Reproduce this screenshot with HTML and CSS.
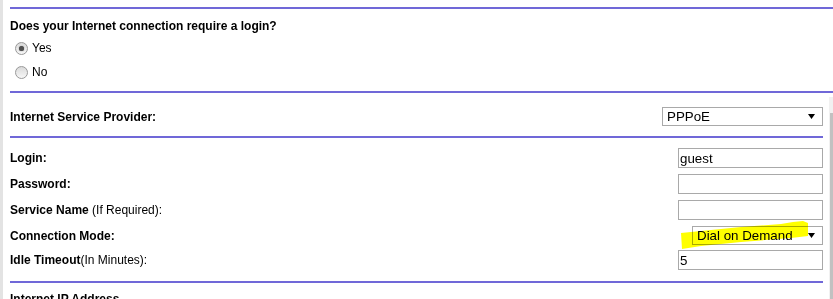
FILE: index.html
```html
<!DOCTYPE html>
<html>
<head>
<meta charset="utf-8">
<title>Internet Setup</title>
<link rel="stylesheet" href="styles.css">
</head>
<body>
<div class="page">
  <div class="gutter"></div>
  <div class="main">
    <div class="rule"></div>
    <div class="question">Does your Internet connection require a login?</div>
    <div class="radios">
      <div class="radio-row"><span class="radio checked"></span><span>Yes</span></div>
      <div class="radio-row"><span class="radio"></span><span>No</span></div>
    </div>
    <div class="rule rule-top"></div>
    <div class="lower">
      <div class="content">
        <div class="isp-row">
          <span class="label">Internet Service Provider:</span>
          <div class="select select-isp">
            <span>PPPoE</span>
            <svg class="arrow" width="7" height="5" viewBox="0 0 7 5"><polygon points="0,0 7,0 3.5,5" fill="#000"/></svg>
          </div>
        </div>
        <div class="rule"></div>
        <div class="form">
          <span class="label">Login:</span>
          <input class="field" type="text" value="guest">
          <span class="label">Password:</span>
          <input class="field" type="password" value="">
          <span class="label">Service Name <span class="note">(If Required):</span></span>
          <input class="field" type="text" value="">
          <span class="label">Connection Mode:</span>
          <div class="select select-mode">
            <span>Dial on Demand</span>
            <svg class="arrow" width="7" height="5" viewBox="0 0 7 5"><polygon points="0,0 7,0 3.5,5" fill="#000"/></svg>
            <svg class="highlight" width="128" height="28" viewBox="0 0 128 28"><polygon points="0,12 20,10 60,6 100,3 112,1 122,0 127,2 127,15 110,17 60,21 20,25 1,28" fill="#ffff00"/></svg>
          </div>
          <span class="label">Idle Timeout<span class="note">(In Minutes):</span></span>
          <input class="field" type="text" value="5">
        </div>
        <div class="rule rule-end"></div>
        <div class="label next">Internet IP Address</div>
      </div>
      <div class="scrollbar"><div class="thumb"></div></div>
    </div>
  </div>
</div>
</body>
</html>
```

FILE: styles.css
```css
html, body {
  margin: 0;
  height: 100%;
  overflow: hidden;
  background: #fff;
}
body {
  font-family: "Liberation Sans", Arial, sans-serif;
  font-size: 12px;
  color: #000;
}
.page {
  display: flex;
  height: 100%;
}
.gutter {
  width: 3px;
  flex: none;
  background: #e3e3e3;
}
.main {
  flex: 1;
  display: flex;
  flex-direction: column;
  padding: 7px 0 0 7px;
  min-width: 0;
}
.rule {
  height: 2px;
  flex: none;
  background: #7068d8;
}
.question {
  font-weight: bold;
  line-height: 14px;
  margin-top: 10px;
}
.radios {
  margin-top: 3px;
  display: flex;
  flex-direction: column;
}
.radio-row {
  height: 24px;
  display: flex;
  align-items: center;
  line-height: 14px;
}
.radio {
  width: 11px;
  height: 11px;
  border: 1px solid #999;
  border-radius: 50%;
  margin: 0 4px 0 5px;
  background: linear-gradient(#dadada, #f7f7f7);
  display: flex;
  align-items: center;
  justify-content: center;
  flex: none;
}
.radio.checked::after {
  content: "";
  width: 5px;
  height: 5px;
  border-radius: 50%;
  background: #505050;
  box-shadow: 0 0 1px #505050;
}
.rule-top {
  margin-top: 7px;
}
.lower {
  display: flex;
  flex: 1;
}
.content {
  width: 813px;
  flex: none;
  display: flex;
  flex-direction: column;
}
.label {
  font-weight: bold;
  line-height: 14px;
}
.note {
  font-weight: normal;
}
.isp-row {
  display: flex;
  justify-content: space-between;
  align-items: center;
  padding: 14px 0 10px;
}
.select {
  box-sizing: border-box;
  height: 19px;
  border: 1px solid #a9a9a9;
  background: #fff;
  display: flex;
  align-items: center;
  justify-content: space-between;
  padding: 0 7px 0 4px;
  font-size: 13.333px;
  line-height: 15px;
}
.select-isp {
  width: 161px;
}
.select-mode {
  width: 131px;
  position: relative;
}
.arrow {
  display: block;
  flex: none;
}
.highlight {
  position: absolute;
  left: -12px;
  top: -6px;
  mix-blend-mode: multiply;
  pointer-events: none;
}
.form {
  margin-top: 7px;
  display: grid;
  grid-template-columns: 1fr auto;
  grid-template-rows: 26px 26px 26px 25px 24px;
  align-items: center;
}
.form > :nth-child(even) {
  justify-self: end;
}
.field {
  box-sizing: border-box;
  width: 145px;
  height: 20px;
  margin: 0;
  border: 1px solid #a9a9a9;
  padding: 0 1px;
  font-family: "Liberation Sans", Arial, sans-serif;
  font-size: 13.333px;
  color: #000;
  background: #fff;
  outline: none;
}
.rule-end {
  margin-top: 9px;
}
.next {
  margin-top: 9px;
}
.scrollbar {
  width: 4px;
  margin: 4px 0 0 6px;
  background: #f1f1f1;
  display: flex;
  flex-direction: column;
  align-items: flex-end;
}
.thumb {
  margin-top: 16px;
  width: 3px;
  flex: 1;
  background: #c1c1c1;
}
```
